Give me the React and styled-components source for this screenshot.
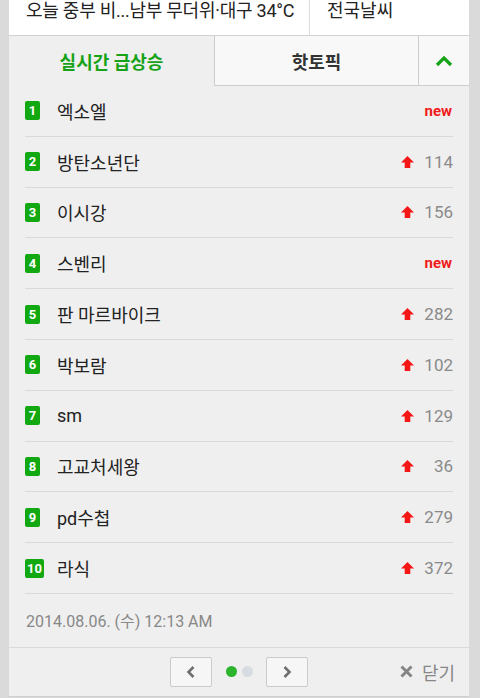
import React from "react";
import styled, { createGlobalStyle } from "styled-components";

const Global = createGlobalStyle`
  html, body { margin: 0; padding: 0; background: #dadada; }
  body { font-family: Roboto, "Noto Sans CJK KR", "Noto Sans", sans-serif; }
  * { box-sizing: border-box; }
`;

const Panel = styled.div`
  margin-left: 9px;
  width: 460px;
  background: #efefef;
  border-bottom: 1px solid #cfcfcf;
`;

const Header = styled.div`
  display: flex;
  height: 36px;
  background: #fff;
  border-bottom: 1px solid #d2d2d2;
`;

const HeadCell = styled.div`
  width: ${(p) => p.$w};
  padding-left: 17px;
  font-size: 18px;
  line-height: 22px;
  color: #222;
  white-space: nowrap;
  letter-spacing: ${(p) => p.$tight ? "-0.25px" : "0"};
  border-left: ${(p) => (p.$divider ? "1px solid #dedede" : "none")};
`;

const Tabs = styled.div`
  display: flex;
  height: 50px;
`;

const Tab = styled.div`
  width: ${(p) => p.$w};
  display: flex;
  align-items: center;
  justify-content: center;
  font-size: 18px;
  font-weight: bold;
  color: ${(p) => (p.$active ? "#17a317" : "#333")};
  background: ${(p) => (p.$active ? "transparent" : "#f8f8f8")};
  border-left: ${(p) => (p.$active ? "none" : "1px solid #cdcdcd")};
  border-bottom: ${(p) => (p.$active ? "none" : "1px solid #cdcdcd")};
`;

const List = styled.ul`
  list-style: none;
  margin: 0;
  padding: 0 16px;
`;

const Row = styled.li`
  display: flex;
  align-items: center;
  height: 50.8px;
  border-bottom: 1px solid #d9d9d9;
`;

const RankSlot = styled.div`
  width: 32px;
  display: flex;
`;

const Badge = styled.span`
  min-width: 15px;
  height: 19px;
  padding: 0 2px;
  border-radius: 2px;
  background: #12a812;
  color: #fff;
  font-family: Roboto, sans-serif;
  font-weight: bold;
  font-size: 13px;
  line-height: 19px;
  text-align: center;
`;

const Keyword = styled.span`
  flex: 1;
  font-size: 18px;
  color: #222;
`;

const New = styled.span`
  color: #f01a1a;
  font-weight: bold;
  font-size: 15px;
  padding-right: 1px;
`;

const Change = styled.span`
  display: flex;
  align-items: center;
`;

const Count = styled.span`
  width: 39px;
  text-align: right;
  font-size: 17px;
  color: #8a8a8a;
`;

const DateLine = styled.div`
  height: 53px;
  padding-left: 17px;
  display: flex;
  align-items: center;
  font-size: 16px;
  color: #888;
`;

const Footer = styled.div`
  display: grid;
  grid-template-columns: 1fr auto 1fr;
  align-items: center;
  height: 49px;
  border-top: 1px solid #dadada;
`;

const Pager = styled.div`
  grid-column: 2;
  display: flex;
  align-items: center;
`;

const NavButton = styled.button`
  width: 42px;
  height: 30px;
  display: flex;
  align-items: center;
  justify-content: center;
  background: #f6f6f6;
  border: 1px solid #cbcbcb;
  border-radius: 2px;
  padding: 0;
`;

const Dots = styled.div`
  display: flex;
  gap: 5px;
  margin: 0 13px 0 14px;
`;

const Dot = styled.span`
  width: 11px;
  height: 11px;
  border-radius: 50%;
  background: ${(p) => (p.$on ? "#2cb52c" : "#d6dce1")};
`;

const Close = styled.div`
  grid-column: 3;
  justify-self: end;
  padding-right: 14px;
  display: flex;
  align-items: center;
  gap: 9px;
  font-size: 18px;
  color: #888;
`;

const UpArrow = () => (
  <svg width="13" height="12" viewBox="0 0 13 12">
    <polygon points="6.5,0 13,6.5 9.3,6.5 9.3,12 3.7,12 3.7,6.5 0,6.5" fill="#f51616" />
  </svg>
);

const items = [
  ["엑소엘", "new"],
  ["방탄소년단", 114],
  ["이시강", 156],
  ["스벤리", "new"],
  ["판 마르바이크", 282],
  ["박보람", 102],
  ["sm", 129],
  ["고교처세왕", 36],
  ["pd수첩", 279],
  ["라식", 372],
];

export default function App() {
  return (
    <>
      <Global />
      <Panel>
        <Header>
          <HeadCell $w="300px" $tight>오늘 중부 비...남부 무더위·대구 34°C</HeadCell>
          <HeadCell $w="160px" $divider>전국날씨</HeadCell>
        </Header>
        <Tabs>
          <Tab $w="205px" $active>실시간 급상승</Tab>
          <Tab $w="204px">핫토픽</Tab>
          <Tab $w="51px">
            <svg width="18" height="12" viewBox="0 0 18 12">
              <polyline points="2,10 9,3 16,10" fill="none" stroke="#17a317" strokeWidth="3.2" />
            </svg>
          </Tab>
        </Tabs>
        <List>
          {items.map(([k, v], i) => (
            <Row key={k}>
              <RankSlot>
                <Badge>{i + 1}</Badge>
              </RankSlot>
              <Keyword>{k}</Keyword>
              {v === "new" ? (
                <New>new</New>
              ) : (
                <Change>
                  <UpArrow />
                  <Count>{v}</Count>
                </Change>
              )}
            </Row>
          ))}
        </List>
        <DateLine>2014.08.06. (수) 12:13 AM</DateLine>
        <Footer>
          <Pager>
            <NavButton aria-label="이전">
              <svg width="10" height="14" viewBox="0 0 10 14">
                <polyline points="7.5,2 2.5,7 7.5,12" fill="none" stroke="#6f6f6f" strokeWidth="2.6" />
              </svg>
            </NavButton>
            <Dots>
              <Dot $on />
              <Dot />
            </Dots>
            <NavButton aria-label="다음">
              <svg width="10" height="14" viewBox="0 0 10 14">
                <polyline points="2.5,2 7.5,7 2.5,12" fill="none" stroke="#6f6f6f" strokeWidth="2.6" />
              </svg>
            </NavButton>
          </Pager>
          <Close>
            <svg width="13" height="13" viewBox="0 0 13 13">
              <path d="M1.5 1.5 L11.5 11.5 M11.5 1.5 L1.5 11.5" stroke="#858585" strokeWidth="3" />
            </svg>
            <span>닫기</span>
          </Close>
        </Footer>
      </Panel>
    </>
  );
}
